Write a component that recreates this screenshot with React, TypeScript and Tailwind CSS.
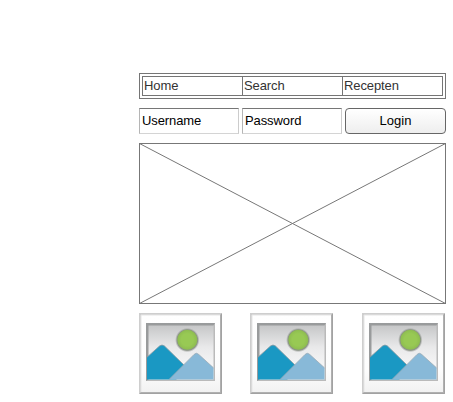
import React from "react";

function Thumbnail({ id }: { id: string }) {
  return (
    <svg width="83" height="81" viewBox="0 0 83 81" className="block shrink-0">
      <defs>
        <linearGradient id={`${id}-sky`} x1="0" y1="0" x2="0" y2="1">
          <stop offset="0" stopColor="#c6c7c8" />
          <stop offset="0.4" stopColor="#e9e9ea" />
          <stop offset="1" stopColor="#ffffff" />
        </linearGradient>
        <linearGradient id={`${id}-mat`} x1="0" y1="0" x2="0" y2="1">
          <stop offset="0" stopColor="#ffffff" />
          <stop offset="0.7" stopColor="#fdfdfd" />
          <stop offset="1" stopColor="#f2f2f2" />
        </linearGradient>
        <radialGradient id={`${id}-sun`}>
          <stop offset="0.6" stopColor="#98c954" />
          <stop offset="1" stopColor="#8dbc50" />
        </radialGradient>
        <radialGradient id={`${id}-halo`}>
          <stop offset="0.84" stopColor="#8c9488" />
          <stop offset="1" stopColor="#b0b0b0" stopOpacity="0" />
        </radialGradient>
        <clipPath id={`${id}-clip`}>
          <rect x="8" y="12" width="66.5" height="54.5" />
        </clipPath>
      </defs>
      <rect width="83" height="81" fill="#b0b0b0" />
      <path d="M0 81V0H83L81 2H2V79Z" fill="#cecece" />
      <path d="M1 80.5H82.5V1" fill="none" stroke="#a2a2a2" />
      <rect x="2" y="2" width="79" height="77" fill={`url(#${id}-mat)`} />
      <path d="M2 79V2H81" fill="none" stroke="#e6e6e6" />
      <rect x="7" y="10" width="69" height="58" fill="#bababa" />
      <path d="M7 68V10H76L74 13H10V66Z" fill="#999b9c" />
      <rect x="9.5" y="12.5" width="65" height="54" fill={`url(#${id}-sky)`} />
      <circle cx="48.3" cy="27" r="12.3" fill={`url(#${id}-halo)`} />
      <circle cx="48.3" cy="26.8" r="10" fill={`url(#${id}-sun)`} />
      <g clipPath={`url(#${id}-clip)`} strokeLinejoin="round">
        <path d="M6 46L20.5 33Q23 31 25.5 33L47 54L36 68H6Z" fill="#1a98c3" stroke="#8a9ba2" strokeWidth="0.8" />
        <path d="M29 67.5L55 41.5Q57.3 39 59.8 41.5L78 58V68H29Z" fill="#88b9d8" stroke="#9cacb6" strokeWidth="0.8" />
      </g>
    </svg>
  );
}

export default function App() {
  return (
    <main className="h-[402px] w-[453px] overflow-hidden bg-white pt-[73px] pl-[139px] font-['Liberation_Sans',Arial,sans-serif] text-[13px] leading-[18px] tracking-[-0.1px] text-black">
      <div className="flex w-[307px] flex-col">
        <nav className="h-[26px] border border-[#757575] p-[2px]">
          <div className="flex h-5 w-[301px] border border-[#757575] text-[#333333]">
            <span className="w-[100px] border-r border-[#757575] pl-px">Home</span>
            <span className="w-[100px] border-r border-[#757575] pl-px">Search</span>
            <span className="pl-px">Recepten</span>
          </div>
        </nav>
        <div className="mt-[9px] flex h-[26px] gap-[3px] leading-6">
          <div className="w-[100px] border border-t-[#767676] border-r-[#cccccc] border-b-[#d4d4d4] border-l-[#b5b5b5] pl-[2px]">Username</div>
          <div className="w-[100px] border border-t-[#767676] border-r-[#cccccc] border-b-[#d4d4d4] border-l-[#b5b5b5] pl-[2px]">Password</div>
          <button className="w-[101px] rounded-[4px] border border-[#666666] bg-linear-to-b from-white to-[#eeeeee] text-center tracking-normal">Login</button>
        </div>
        <svg width="307" height="161" viewBox="0 0 307 161" className="mt-[9px] block" fill="none" stroke="#777777">
          <rect x="0.5" y="0.5" width="306" height="160" />
          <path d="M0.5 0.5L306.5 160.5M306.5 0.5L0.5 160.5" />
        </svg>
        <div className="mt-[9px] flex">
          <Thumbnail id="first" />
          <div className="ml-7">
            <Thumbnail id="second" />
          </div>
          <div className="ml-[29px]">
            <Thumbnail id="third" />
          </div>
        </div>
      </div>
    </main>
  );
}
